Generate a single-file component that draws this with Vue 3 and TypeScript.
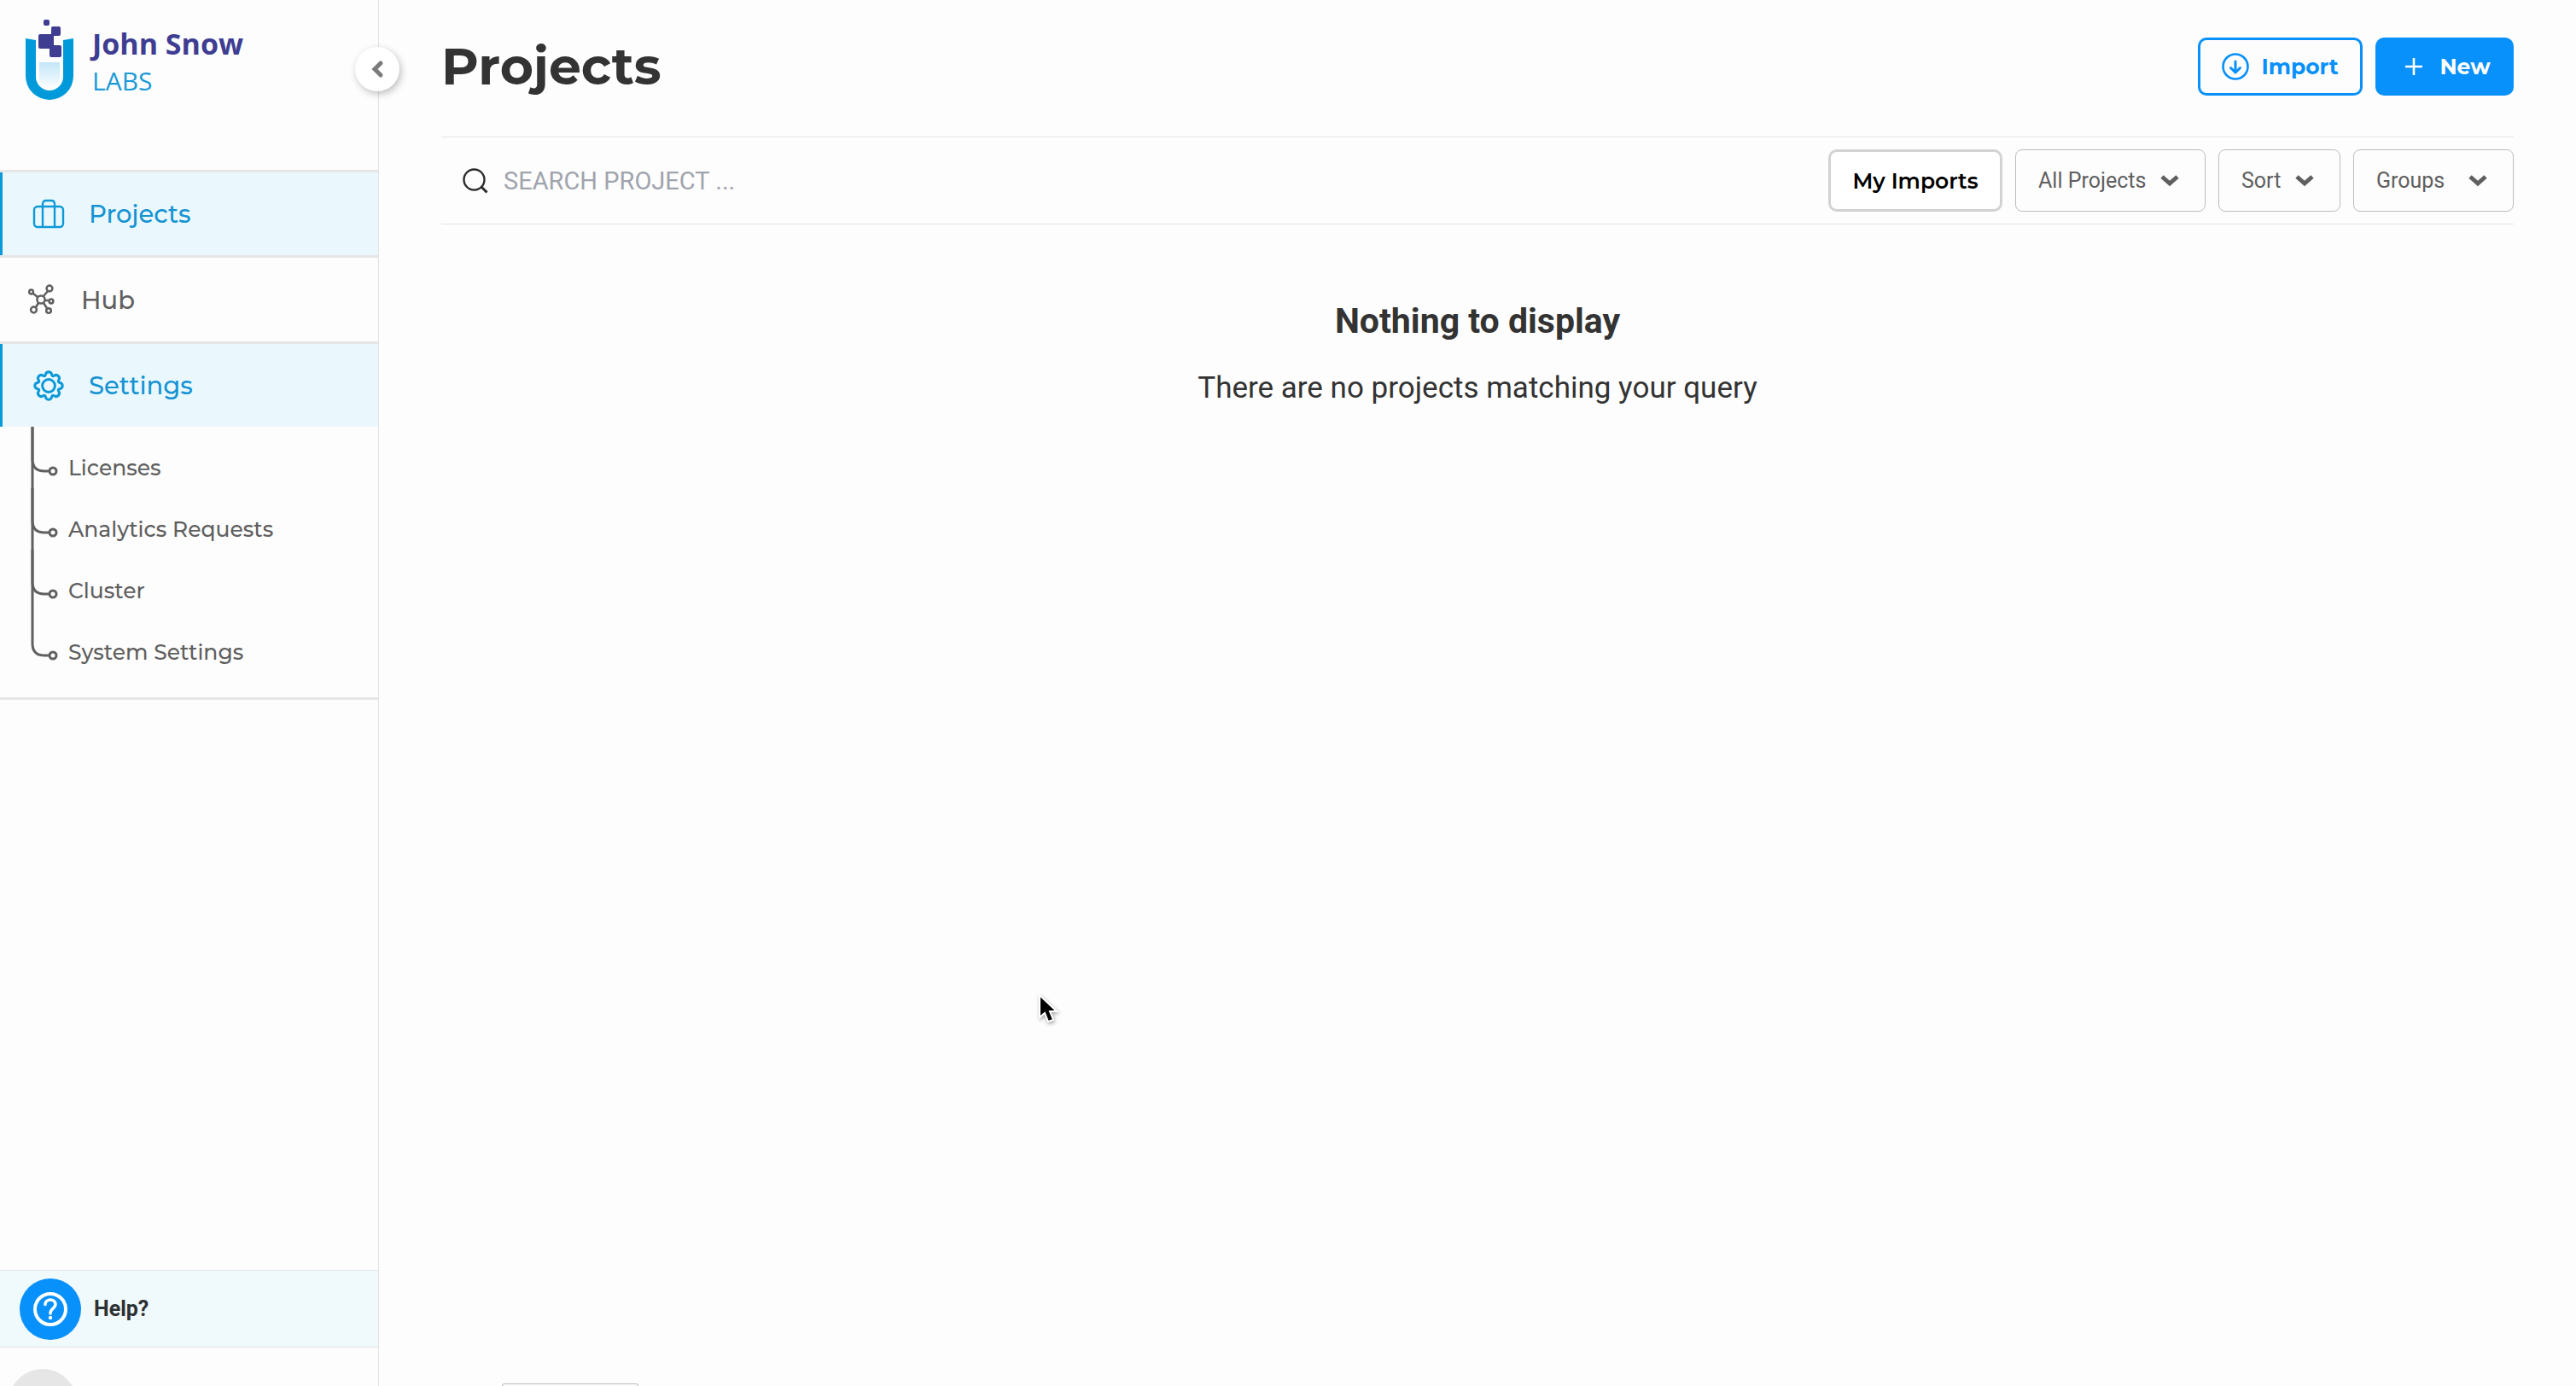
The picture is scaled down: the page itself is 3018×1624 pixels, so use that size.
<script setup lang="ts">
import { ref } from 'vue'

interface Filter {
  id: string
  label: string
  wide: boolean
}

const search = ref<string>('')
const subItems: string[] = ['Licenses', 'Analytics Requests', 'Cluster', 'System Settings']
const filters: Filter[] = [
  { id: 'scope', label: 'All Projects', wide: false },
  { id: 'sort', label: 'Sort', wide: false },
  { id: 'groups', label: 'Groups', wide: true },
]
</script>

<template>
  <div class="app">
    <aside class="sidebar">
      <a class="brand" href="#">
        <svg class="brand-mark" width="60" height="100" viewBox="28 20 60 100" aria-hidden="true">
          <defs>
            <linearGradient id="liquid" x1="0" y1="0" x2="0" y2="1">
              <stop offset="0" stop-color="#c3e6f9" />
              <stop offset="1" stop-color="#f6fcff" />
            </linearGradient>
          </defs>
          <path d="M46 73H70V92Q70 100 58 101Q46 100 46 92Z" fill="url(#liquid)" />
          <path d="M30 45L42 47V90A16 16 0 0 0 74 90V47L86 45V89A28 28 0 0 1 30 89Z" fill="#009adb" />
          <g fill="#3f3d92">
            <rect x="51" y="23" width="7" height="7" rx="2" />
            <rect x="60" y="31" width="11" height="11" rx="2" />
            <rect x="45" y="40" width="18" height="17" rx="2" />
            <rect x="58" y="53" width="14" height="14" rx="2" />
          </g>
        </svg>
        <span class="brand-text">
          <span class="brand-name">John Snow</span>
          <span class="brand-sub">LABS</span>
        </span>
      </a>
      <button class="collapse" type="button" aria-label="Collapse sidebar">
        <svg width="16" height="22" viewBox="0 0 16 22" fill="none" stroke="#7b7b7b" stroke-width="5">
          <path d="M12 4L5 11L12 18" stroke-linecap="round" />
        </svg>
      </button>

      <nav class="nav">
        <a class="nav-item active" href="#">
          <svg width="38" height="36" viewBox="0 0 38 36" fill="none" stroke="#0d99d8" stroke-width="2.4">
            <rect x="2" y="9" width="34" height="24" rx="4" />
            <path d="M12 33V6Q12 2 16 2H22Q26 2 26 6V33" />
          </svg>
          <span>Projects</span>
        </a>
        <a class="nav-item" href="#">
          <svg width="32" height="36" viewBox="0 0 32 36" fill="none" stroke="#5f5f5f" stroke-width="2.5">
            <circle cx="15" cy="18" r="4.6" />
            <circle cx="3.5" cy="9" r="2.4" />
            <circle cx="25" cy="5" r="3.4" />
            <circle cx="27" cy="20" r="2.4" />
            <circle cx="24" cy="31" r="2.8" />
            <circle cx="6.500" cy="30" r="3.4" />
            <path d="M6 11L11 15M23 8L18 14M20 19H24M18 22L22 28M12 22L9 27" />
          </svg>
          <span>Hub</span>
        </a>
        <a class="nav-item active" href="#">
          <svg width="38" height="36" viewBox="0 0 38 36" fill="none" stroke="#0d99d8" stroke-width="3" stroke-linejoin="round">
            <circle cx="19" cy="18" r="7.4" />
            <path d="M15.2 5.6C15.6 2.7 17 1.8 19 1.8S22.4 2.7 22.8 5.6Q23.6 7.2 25 6.5C27.4 4.7 29 5.2 30.4 6.6S32.3 9.6 30.5 12Q29.8 13.4 31.4 14.2C34.3 14.6 35.2 16 35.2 18S34.3 21.4 31.4 21.8Q29.8 22.6 30.5 24C32.3 26.4 31.8 28 30.4 29.4S27.4 31.3 25 29.5Q23.6 28.8 22.8 30.4C22.4 33.3 21 34.2 19 34.2S15.6 33.3 15.2 30.4Q14.4 28.8 13 29.5C10.6 31.3 9 30.8 7.6 29.4S5.7 26.4 7.5 24Q8.2 22.6 6.6 21.8C3.7 21.4 2.8 20 2.8 18S3.7 14.6 6.6 14.2Q8.2 13.4 7.5 12C5.7 9.6 6.2 8 7.6 6.6S10.6 4.7 13 6.5Q14.4 7.2 15.2 5.6Z" />
          </svg>
          <span>Settings</span>
        </a>
        <ul class="sub">
          <li v-for="(item, i) in subItems" :key="item">
            <svg width="34" height="72" viewBox="0 0 34 72" fill="none" stroke="#606060" stroke-width="3" aria-hidden="true">
              <path v-if="i < subItems.length - 1" d="M4 0V72" />
              <path d="M4 0V38Q4 52 18 52H23" />
              <circle cx="28" cy="52" r="4" />
            </svg>
            <a href="#">{{ item }}</a>
          </li>
        </ul>
      </nav>

      <div class="sidebar-foot">
        <a class="help" href="#">
          <span class="help-icon">
            <svg width="42" height="42" viewBox="0 0 42 42" fill="none" stroke="#fff" stroke-width="4" aria-hidden="true">
              <circle cx="21" cy="21" r="18" />
              <path d="M15 15.5C15 8.2 27 8.2 27 15.5C27 20 21 19.8 21 26" stroke-width="3.6" stroke-linecap="round" />
              <circle cx="21" cy="31" r="2.2" fill="#fff" stroke="none" />
            </svg>
          </span>
          <span>Help?</span>
        </a>
        <div class="user"><span class="avatar"></span></div>
      </div>
    </aside>

    <main class="main">
      <header class="head">
        <h1>Projects</h1>
        <div class="actions">
          <button class="btn outline" type="button">
            <svg width="32" height="32" viewBox="0 0 32 32" fill="none" stroke="#0890fb" stroke-width="3" aria-hidden="true">
              <circle cx="16" cy="16" r="14.5" stroke-width="2.6" />
              <path d="M16 10V23M10.5 17.5L16 23L21.5 17.5" stroke-linecap="round" stroke-linejoin="round" />
            </svg>
            Import
          </button>
          <button class="btn solid" type="button">
            <svg width="20" height="20" viewBox="0 0 20 20" fill="none" stroke="#fff" stroke-width="2.6" aria-hidden="true">
              <path d="M10 0V20M0 10H20" />
            </svg>
            New
          </button>
        </div>
      </header>

      <section class="toolbar">
        <label class="search">
          <svg width="30" height="30" viewBox="0 0 30 30" fill="none" stroke="#2b2b2b" stroke-width="2.4" aria-hidden="true">
            <circle cx="13.5" cy="13.5" r="12" />
            <path d="M21.5 21.5L28.5 28.5" stroke-width="3" />
          </svg>
          <input v-model="search" type="text" placeholder="SEARCH PROJECT ..." aria-label="Search project" />
        </label>
        <div class="filters">
          <button class="imports" type="button">My Imports</button>
          <div v-for="f in filters" :key="f.id" class="select" :class="{ wide: f.wide }">
            <select :aria-label="f.label">
              <option>{{ f.label }}</option>
            </select>
            <svg width="22" height="14" viewBox="0 0 22 14" fill="none" stroke="#5f5f5f" stroke-width="5" aria-hidden="true">
              <path d="M2 2L11 10L20 2" />
            </svg>
          </div>
        </div>
      </section>

      <section class="empty">
        <h2>Nothing to display</h2>
        <p>There are no projects matching your query</p>
      </section>

      <div class="pager"></div>
    </main>

    <svg class="pointer" width="28" height="36" viewBox="0 0 28 36" aria-hidden="true">
      <path d="M3 1V27L9 22L13 32L19 30L15 20H23Z" fill="#000" stroke="#fff" stroke-width="2" />
    </svg>
  </div>
</template>

<style>
body {
  background: #fdfdfd;
}
</style>

<style scoped>
* {
  box-sizing: border-box;
}
.app {
  position: relative;
  display: flex;
  min-height: 100vh;
  font-family: Montserrat, Inter, sans-serif;
  color: #333;
}
a {
  color: inherit;
  text-decoration: none;
}
svg {
  flex: none;
  display: block;
}
.sidebar {
  position: relative;
  display: flex;
  flex-direction: column;
  flex: none;
  width: 444px;
  border-right: 1px solid #e2e2e4;
}
.brand {
  display: flex;
  gap: 20px;
  height: 199px;
  padding: 20px 28px;
}
.brand-text {
  display: flex;
  flex-direction: column;
  padding-top: 10px;
  font-family: 'Open Sans', sans-serif;
  line-height: 43px;
}
.brand-name {
  font-size: 34px;
  font-weight: 700;
  color: #3f3d92;
}
.brand-sub {
  font-size: 30px;
  color: #1a9ad6;
}
.collapse {
  position: absolute;
  top: 55px;
  right: -25px;
  display: flex;
  align-items: center;
  justify-content: center;
  width: 52px;
  height: 52px;
  padding: 0;
  border: 0;
  border-radius: 50%;
  background: #fff;
  box-shadow: 2px 3px 8px rgba(0, 0, 0, 0.25);
}
.nav {
  border-bottom: 3px solid #e6e6e6;
}
.nav-item {
  display: flex;
  align-items: center;
  gap: 30px;
  height: 101px;
  padding-left: 33px;
  border-top: 3px solid #e6e6e6;
  font-size: 29px;
  font-weight: 500;
  color: #5f5f5f;
}
.nav-item.active {
  gap: 28px;
  height: 100px;
  padding-left: 38px;
  color: #1593d2;
  background: #eaf8fe;
  box-shadow: inset 3px 0 #0d99d8;
}
.sub {
  margin: 0;
  padding: 0 0 29px;
  list-style: none;
}
.sub li {
  display: flex;
  gap: 12px;
  padding-left: 34px;
  font-size: 25px;
  font-weight: 500;
  line-height: 32px;
  color: #5f5f5f;
}
.sub a {
  padding-top: 32px;
}
.sidebar-foot {
  margin-top: auto;
}
.help {
  display: flex;
  align-items: center;
  gap: 15px;
  height: 91px;
  padding-left: 23px;
  border: solid #e4e4e8;
  border-width: 1px 0;
  background: #f0f9fc;
  font: 700 25px Roboto, sans-serif;
  color: #2d3133;
}
.help-icon {
  display: flex;
  align-items: center;
  justify-content: center;
  width: 72px;
  height: 72px;
  border-radius: 50%;
  background: #0890fb;
}
.user {
  height: 45px;
  padding: 25px 10px 0;
  overflow: hidden;
}
.avatar {
  display: block;
  width: 80px;
  height: 80px;
  border-radius: 50%;
  background: #e6e6e6;
}
.main {
  display: flex;
  flex: 1;
  flex-direction: column;
  padding: 0 73px;
}
.head {
  display: flex;
  align-items: center;
  justify-content: space-between;
  height: 160px;
  padding-bottom: 4px;
}
h1 {
  margin: 0 0 2px;
  font-size: 60px;
  font-weight: 700;
}
.actions,
.filters {
  display: flex;
  gap: 15px;
}
.btn {
  display: flex;
  align-items: center;
  justify-content: center;
  height: 68px;
  border-radius: 10px;
  font: 700 25px Montserrat, Inter, sans-serif;
}
.outline {
  gap: 14px;
  width: 193px;
  border: 3px solid #0890fb;
  color: #0890fb;
  background: none;
}
.solid {
  gap: 20px;
  width: 162px;
  padding: 0 0 0 8px;
  border: 0;
  color: #fff;
  background: #0890fb;
}
.toolbar {
  display: flex;
  align-items: center;
  justify-content: space-between;
  height: 103px;
  border: solid #e4e5e6;
  border-width: 1px 0;
}
.search {
  display: flex;
  flex: 1;
  align-items: center;
  gap: 18px;
  padding-left: 25px;
}
.search input {
  flex: 1;
  padding: 0;
  border: 0;
  outline: 0;
  background: none;
  font: 29px Roboto, sans-serif;
  color: #333;
}
.search input::placeholder {
  color: #a0a4ad;
  opacity: 1;
}
.imports {
  width: 204px;
  height: 73px;
  padding: 0;
  border: 3px solid #d2d2d2;
  border-radius: 10px;
  background: #fff;
  font: 600 25px Montserrat, Inter, sans-serif;
  color: #000;
}
.select {
  position: relative;
}
.select select {
  width: 100%;
  height: 73px;
  padding: 0 68px 0 26px;
  border: 1px solid #bdbdbd;
  border-radius: 8px;
  appearance: none;
  background: #fdfdfd;
  font: 25px Roboto, sans-serif;
  color: #5f5f5f;
}
.select.wide {
  width: 188px;
}
.select svg {
  position: absolute;
  top: 30px;
  right: 31px;
  pointer-events: none;
}
.empty {
  padding-top: 85px;
  text-align: center;
  font-family: Roboto, sans-serif;
}
h2 {
  margin: 0 0 27px;
  font-size: 41px;
  font-weight: 700;
  line-height: 56px;
}
p {
  margin: 0;
  font-size: 35px;
  line-height: 48px;
}
.pager {
  width: 160px;
  height: 3px;
  margin: auto 0 0 71px;
  border: 1px solid #bdbdbd;
  border-bottom: 0;
  border-radius: 8px 8px 0 0;
}
.pointer {
  position: absolute;
  top: 1165px;
  left: 1215px;
  filter: drop-shadow(1px 2px 2px rgba(0, 0, 0, 0.35));
}
</style>
